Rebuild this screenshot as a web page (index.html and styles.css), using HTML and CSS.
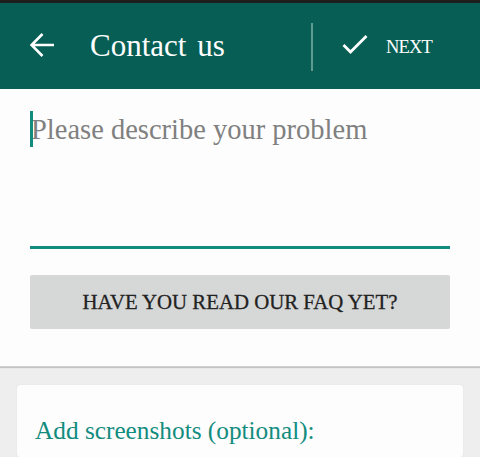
FILE: index.html
```html
<!DOCTYPE html>
<html>
<head>
<meta charset="utf-8">
<link rel="stylesheet" href="styles.css">
</head>
<body>
<div class="statusbar"></div>
<header class="toolbar">
  <svg class="back" width="24" height="24" viewBox="0 0 24 24"><path d="M1 12H24M12.5 1L1.5 12L12.5 23" fill="none" stroke="#fff" stroke-width="2.6"/></svg>
  <h1 class="title">Contact us</h1>
  <div class="spacer"></div>
  <div class="divider"></div>
  <svg class="check" width="26" height="20" viewBox="0 0 26 20"><path d="M1.5 10L8.5 17L24.5 1" fill="none" stroke="#fff" stroke-width="2.8"/></svg>
  <span class="next">NEXT</span>
</header>
<section class="form">
  <div class="field">
    <span class="caret"></span>
    <div class="placeholder">Please describe your problem</div>
  </div>
  <div class="faq">HAVE YOU READ OUR FAQ YET?</div>
</section>
<section class="card">
  <div class="card-title">Add screenshots (optional):</div>
</section>
</body>
</html>
```
FILE: styles.css
```css
html, body {
  margin: 0;
  padding: 0;
}
body {
  background: #eeeeee;
  font-family: "Liberation Serif", "Times New Roman", serif;
  width: 480px;
  height: 457px;
  overflow: hidden;
}
.statusbar {
  height: 3px;
  background: #1e1e1e;
}
.toolbar {
  height: 86px;
  background: #075e54;
  display: flex;
  align-items: center;
  padding-left: 30px;
  padding-right: 48px;
  color: #fff;
}
.back {
  display: block;
  margin-top: -2px;
}
.title {
  margin: 0 0 0 36px;
  font-weight: normal;
  font-size: 31px;
  line-height: 36px;
  word-spacing: 3px;
}
.spacer {
  flex: 1;
}
.divider {
  width: 2px;
  height: 48px;
  background: #5f9a92;
  margin-top: 2px;
}
.check {
  display: block;
  margin-left: 29px;
  margin-top: -2px;
}
.next {
  margin-left: 18px;
  font-size: 18.5px;
  letter-spacing: -0.8px;
  line-height: 20px;
  margin-top: 1px;
}
.form {
  background: #fdfdfd;
  padding: 22px 30px 37px;
  box-shadow: 0 1px 1px rgba(0,0,0,0.18);
  border-bottom: 1px solid #d0d0d0;
}
.field {
  position: relative;
  height: 135px;
  border-bottom: 3px solid #128c7e;
}
.caret {
  position: absolute;
  left: 0;
  top: 0;
  width: 3px;
  height: 36px;
  background: #128c7e;
}
.placeholder {
  font-size: 28.5px;
  line-height: 36px;
  color: #808080;
  padding-left: 1px;
  padding-top: 1px;
}
.faq {
  margin-top: 26px;
  height: 54px;
  background: #d6d7d7;
  border-radius: 2px;
  display: flex;
  align-items: center;
  justify-content: center;
  font-size: 20.8px;
  color: #222;
  -webkit-text-stroke: 0.3px #222;
}
.card {
  margin: 18px 17px 0;
  background: #fdfdfd;
  border-radius: 3px;
  height: 72px;
  padding: 31px 18px 0;
  box-sizing: border-box;
  box-shadow: 0 0 1px rgba(0,0,0,0.15);
}
.card-title {
  font-size: 25.3px;
  color: #128c7e;
  line-height: 29px;
}
```
